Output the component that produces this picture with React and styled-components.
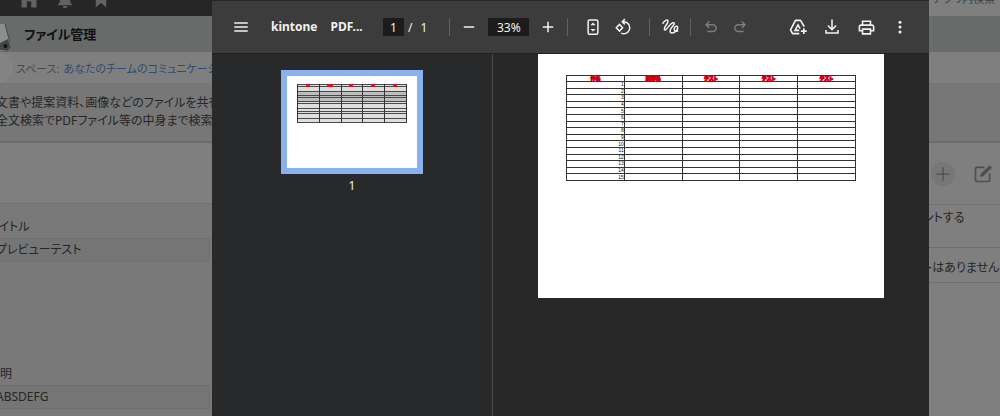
import React from "react";
import styled, { createGlobalStyle } from "styled-components";

const GlobalStyle = createGlobalStyle`
  * { box-sizing: border-box; }
  html, body, #root { height: 100%; }
  body {
    margin: 0;
    background: #fff;
    font-family: "Noto Sans", "Noto Sans CJK JP", sans-serif;
    font-feature-settings: "palt";
    overflow: hidden;
  }
  button, input { font: inherit; color: inherit; border: 0; padding: 0; margin: 0; }
`;

/* ---------- kintone page behind the viewer ---------- */

const Screen = styled.div`
  position: relative;
  height: 100%;
  padding-bottom: 2px;
  overflow: hidden;
`;

const Backdrop = styled.div`
  height: 100%;
  display: flex;
  flex-direction: column;
  background: #7f7f7f;
  color: #262626;
  white-space: nowrap;
  overflow: hidden;
`;

const GlobalHeader = styled.header`
  display: flex;
  flex: 0 0 16px;
  overflow: hidden;
  background: #262626;
`;

const HeaderIcons = styled.nav`
  display: flex;
  flex: 1;
  gap: 18px;
  padding-left: 20px;
  color: #626262;
  svg { flex: none; margin-top: -9px; }
`;

const SearchBox = styled.div`
  width: 71px;
  padding-left: 4px;
  overflow: hidden;
  background: #7f7f7f;
  font-size: 11px;
  line-height: 16px;
  color: #3d3d3d;
  span { display: block; margin-top: -9px; }
`;

const AppTitleBar = styled.div`
  display: flex;
  align-items: center;
  flex: 0 0 36px;
  background: #686b6a;
`;

const AppIcon = styled.svg`
  width: 12px;
  height: 36px;
`;

const AppTitle = styled.h1`
  margin: 0 0 0 12px;
  font-size: 13px;
  line-height: 20px;
  font-weight: 600;
  color: #111;
`;

const SpaceBar = styled.div`
  display: flex;
  align-items: center;
  gap: 4px;
  flex: 0 0 31px;
  font-size: 11px;
  color: #4a4a4a;
  a { color: #2f4a6c; text-decoration: none; }
`;

const SpaceIcon = styled.span`
  width: 12px;
  height: 28px;
  border-radius: 0 14px 14px 0;
  border: 1px solid #888;
  border-left: 0;
  background: #838383;
`;

const Description = styled.div`
  flex: 0 0 60px;
  padding-top: 11px;
  border-bottom: 2px solid #6c6c6c;
  background: #777;
  font-size: 12px;
  line-height: 18px;
  p { margin: 0 0 0 -4px; }
`;

const Columns = styled.div`
  flex: 1;
  display: flex;
`;

const Record = styled.main`
  flex: 1;
  padding-top: 60px;
`;

const Fields = styled.div`
  height: 100%;
  padding-top: 12px;
  border-top: 1px solid #707070;
  background: #797979;
  font-size: 12px;
`;

const Field = styled.div`
  height: 147px;
  h2 {
    margin: 0;
    font-size: 12px;
    line-height: 22px;
    font-weight: 400;
    text-indent: -12px;
  }
  p {
    width: 210px;
    margin: 0;
    border: 1px solid #6f6f6f;
    border-left: 0;
    background: #757575;
    line-height: 22px;
    text-indent: -4px;
  }
`;

const Comments = styled.aside`
  width: 77px;
  font-size: 12px;
`;

const CommentActions = styled.div`
  display: flex;
  align-items: center;
  gap: 16px;
  height: 62px;
  padding-left: 8px;
  border-bottom: 1px solid #747474;
  color: #4f4f4f;
`;

const RoundButton = styled.button`
  display: grid;
  place-items: center;
  width: 24px;
  height: 24px;
  border-radius: 50%;
  background: #777;
`;

const PlainButton = styled(RoundButton)`
  background: none;
`;

const CommentLine = styled.p`
  margin: 0;
  height: ${(p) => p.$height}px;
  padding: ${(p) => p.$top}px 0 0;
  border-bottom: 1px solid #6f6f6f;
  line-height: 16px;
`;

/* ---------- PDF viewer ---------- */

const Viewer = styled.section`
  position: absolute;
  inset: 1px 71px 2px 212px;
  display: flex;
  flex-direction: column;
  background: #282828;
  color: #f1f1f1;
`;

const Toolbar = styled.div`
  display: flex;
  align-items: center;
  flex: 0 0 53px;
  padding: 0 15px 0 15px;
  border-bottom: 1px solid #222;
  background: #3c3c3c;
  font-size: 12px;
`;

const FileName = styled.h2`
  width: 96px;
  margin: 0 16px;
  font-size: 12px;
  line-height: 18px;
  font-weight: 700;
  white-space: nowrap;
  span { margin-left: 13px; }
`;

const Group = styled.div`
  display: flex;
  align-items: center;
  gap: ${(p) => p.$gap || 0}px;
  margin-left: ${(p) => (p.$end ? "auto" : `${p.$before || 0}px`)};
`;

const ToolButton = styled.button`
  display: grid;
  place-items: center;
  width: 28px;
  height: 28px;
  background: none;
  color: ${(p) => (p.disabled ? "#7c7c7c" : "#f1f1f1")};
`;

const ValueBox = styled.input`
  width: ${(p) => p.$width}px;
  height: 18px;
  background: #1c1c1c;
  text-align: center;
`;

const PageCount = styled.span`
  display: flex;
  gap: 8px;
`;

const Separator = styled.span`
  width: 1px;
  height: 18px;
  background: #606060;
`;

const Panes = styled.div`
  flex: 1;
  display: flex;
`;

const Thumbnails = styled.aside`
  display: flex;
  flex-direction: column;
  align-items: center;
  flex: 0 0 281px;
  padding-top: 16px;
  border-right: 1px solid #4a4a4a;
  background: #28292b;
  font-size: 12px;
  line-height: 24px;
`;

const Thumbnail = styled.button`
  width: 142px;
  height: 104px;
  padding: 6px;
  background: #8ab0ef;
  svg { display: block; background: #fff; }
`;

const Canvas = styled.div`
  flex: 1;
  display: flex;
  justify-content: center;
  align-items: flex-start;
`;

const Sheet = styled.article`
  width: 346px;
  height: 244px;
  padding: 21px 28px;
  background: #fff;
`;

const SheetTable = styled.table`
  width: 100%;
  height: 106px;
  table-layout: fixed;
  border-collapse: collapse;
  font-family: "Liberation Sans", "Noto Sans CJK JP", sans-serif;
  font-size: 5px;
  line-height: 5px;
  color: #111;
  th, td { padding: 0; border: 1px solid #333; }
  th { font-weight: 900; color: #d00010; -webkit-text-stroke: 1px #d00010; }
  td { text-align: right; }
`;

const Icon = ({ size = 18, children, ...rest }) => (
  <svg
    width={size}
    height={size}
    viewBox="0 0 24 24"
    fill="none"
    stroke="currentColor"
    strokeWidth="2"
    aria-hidden="true"
    {...rest}
  >
    {children}
  </svg>
);

const Solid = ({ d, ...rest }) => (
  <Icon {...rest}>
    <path d={d} fill="currentColor" stroke="none" />
  </Icon>
);

const UNDO =
  "M7 19v-2h7.1q1.575 0 2.738-1T18 13.5T16.838 11T14.1 10H7.8l2.6 2.6L9 14L4 9l5-5l1.4 1.4L7.8 8h6.3q2.425 0 4.163 1.575T20 13.5t-1.737 3.925T14.1 19z";

const headings = ["件名", "顧客名", "テスト", "テスト", "テスト"];
const rows = Array.from({ length: 15 }, (_, i) => i + 1);

const PageThumbnail = () => (
  <svg width="130" height="92" viewBox="0 0 130 92" aria-hidden="true">
    <rect x="10" y="8" width="110" height="39" fill="#dedede" />
    <rect x="10" y="16" width="110" height="9" fill="#bdbdbd" />
    {[8.5, 10.5, 15.5, 19.5, 21.5, 25.5, 27.5, 32.5, 35.5, 37.5, 42.5, 46.5].map((y) => (
      <path key={y} d={`M10 ${y}h110`} stroke="#4a4a4a" />
    ))}
    {[10.5, 32.5, 54.5, 75.5, 97.5, 119.5].map((x) => (
      <path key={x} d={`M${x} 8v39`} stroke="#333" />
    ))}
    {[19, 40, 62, 84, 106].map((x, i) => (
      <rect key={x} x={x} y="8" width={i === 1 ? 6 : 4} height="3" fill="#d41424" />
    ))}
  </svg>
);

const KintonePage = () => (
  <Backdrop>
    <GlobalHeader>
      <HeaderIcons aria-label="メニュー">
        <Solid d="M2 10 12 2l10 8v12h-7v-8H9v8H2z" />
        <Solid d="M12 2a7 7 0 0 0-7 7v6l-3 4h20l-3-4V9a7 7 0 0 0-7-7zM9 20h6a3 3 0 0 1-6 0z" />
        <Solid d="M5 2h14v20l-7-6-7 6z" />
      </HeaderIcons>
      <SearchBox><span>アプリ内検索</span></SearchBox>
    </GlobalHeader>
    <AppTitleBar>
      <AppIcon viewBox="0 0 12 36" aria-hidden="true">
        <path d="M0 8h5l5 22-4 5H0z" fill="#8d8f8e" />
        <path d="M0 27l8-4 2.5 8-3 4-7.5-1z" fill="#444746" />
        <circle cx="5.5" cy="30" r="2" fill="#151515" />
        <path d="M5 8l5 18" stroke="#4c4e4d" fill="none" />
      </AppIcon>
      <AppTitle>ファイル管理</AppTitle>
    </AppTitleBar>
    <SpaceBar>
      <SpaceIcon />
      <span>スペース:</span>
      <a href="#space">あなたのチームのコミュニケーション</a>
    </SpaceBar>
    <Description>
      <p>文書や提案資料、画像などのファイルを共有</p>
      <p>全文検索でPDFファイル等の中身まで検索</p>
    </Description>
    <Columns>
      <Record>
        <Fields>
          <Field>
            <h2>タイトル</h2>
            <p>プレビューテスト</p>
          </Field>
          <Field>
            <h2>説明</h2>
            <p>ABSDEFG</p>
          </Field>
        </Fields>
      </Record>
      <Comments>
        <CommentActions>
          <RoundButton aria-label="追加">
            <Icon size={20} strokeWidth="1.5"><path d="M12 4v16M4 12h16" /></Icon>
          </RoundButton>
          <PlainButton aria-label="編集">
            <Icon size={20}>
              <path d="M14 4H5a2 2 0 0 0-2 2v13a2 2 0 0 0 2 2h13a2 2 0 0 0 2-2v-8" />
              <path d="M9 15l1-3.5L20 2l2.5 2.5L12.5 14z" fill="currentColor" strokeWidth="1" />
            </Icon>
          </PlainButton>
        </CommentActions>
        <CommentLine $height={43} $top={5}>ントする</CommentLine>
        <CommentLine $height={35} $top={12}>トはありません</CommentLine>
      </Comments>
    </Columns>
  </Backdrop>
);

const ViewerToolbar = () => (
  <Toolbar role="toolbar">
    <ToolButton aria-label="メニュー">
      <Icon><path d="M3 6.7h18M3 12h18M3 17.3h18" /></Icon>
    </ToolButton>
    <FileName>kintone<span>PDF...</span></FileName>
    <Group $gap={4}>
      <ValueBox $width={21} defaultValue="1" aria-label="ページ番号" />
      <PageCount><span>/</span><span>1</span></PageCount>
    </Group>
    <Group $gap={5} $before={22}>
      <Separator />
      <ToolButton aria-label="縮小"><Icon><path d="M5 12h14" /></Icon></ToolButton>
      <ValueBox $width={41} defaultValue="33%" aria-label="ズーム" />
      <ToolButton aria-label="拡大"><Icon><path d="M12 5v14M5 12h14" /></Icon></ToolButton>
      <Separator />
    </Group>
    <Group $gap={2} $before={11}>
      <ToolButton aria-label="ページに合わせる">
        <Icon>
          <rect x="5.5" y="2.5" width="13" height="19" rx="2" />
          <path d="M12 6l3.5 3.5h-7zM8.500 14.5h7L12 18z" fill="currentColor" stroke="none" />
        </Icon>
      </ToolButton>
      <ToolButton aria-label="回転">
        <Icon>
          <path d="M7.3 8.5l4.2 4.5-4.2 4.5L3 13z" />
          <path d="M12 5h1a8 8 0 0 1 0 16c-1.300 0-2.400-.3-3.400-.8" />
          <path d="M14.5 1.5L11 5l3.500 3.500" />
        </Icon>
      </ToolButton>
    </Group>
    <Group $gap={6} $before={12}>
      <Separator />
      <ToolButton aria-label="手書き">
        <Icon size={20} strokeLinecap="round" strokeWidth="1.800">
          <path d="M3.500 7.500C5.500 4.500 8.500 2.500 9.500 4.500c1.200 3-5 7-4.300 10.300C6.200 18.500 11.500 8.500 15 7c4.500-.8 1 3.500-1 5.500-2.500 2.700-2.500 6.700.2 6.800 4 0 7.500-4 7-7-.7-2.600-4-.8-4.200 2-.1 2.200 2 3.200 4.200 2.500" />
        </Icon>
      </ToolButton>
      <Separator />
    </Group>
    <Group $gap={1} $before={6}>
      <ToolButton disabled aria-label="元に戻す"><Solid d={UNDO} /></ToolButton>
      <ToolButton disabled aria-label="やり直す"><Solid d={UNDO} transform="scale(-1 1)" /></ToolButton>
    </Group>
    <Group $gap={6} $end>
      <ToolButton aria-label="ドライブに保存">
        <Icon size={20}>
          <path d="M13.500 20H5.500L3 15.500 9 4h6l4.500 7.500" strokeLinejoin="round" />
          <path d="M13.500 16H8.500L12 9.500l2.500 4.500" />
          <path d="M19 13.500v7M15.500 17h7" />
        </Icon>
      </ToolButton>
      <ToolButton aria-label="ダウンロード">
        <Icon><path d="M12 2v13M6.5 10l5.5 5.5 5.5-5.5M4 16v4h16v-4" /></Icon>
      </ToolButton>
      <ToolButton aria-label="印刷">
        <Solid d="M19 8h-1V3H6v5H5c-1.660 0-3 1.340-3 3v6h4v4h12v-4h4v-6c0-1.660-1.340-3-3-3zM8 5h8v3H8V5zm8 12v2H8v-4h8v2zm2-2v-2H6v2H4v-4c0-.55.45-1 1-1h14c.55 0 1 .45 1 1v4h-2z" size={19} />
      </ToolButton>
      <ToolButton aria-label="その他">
        <Icon>
          <g fill="currentColor" stroke="none">
            <circle cx="12" cy="5.5" r="2" />
            <circle cx="12" cy="12" r="2" />
            <circle cx="12" cy="18.5" r="2" />
          </g>
        </Icon>
      </ToolButton>
    </Group>
  </Toolbar>
);

export default function App() {
  return (
    <Screen>
      <GlobalStyle />
      <KintonePage />
      <Viewer role="dialog" aria-label="kintone PDF">
        <ViewerToolbar />
        <Panes>
          <Thumbnails>
            <Thumbnail aria-label="ページ 1"><PageThumbnail /></Thumbnail>
            <span>1</span>
          </Thumbnails>
          <Canvas>
            <Sheet>
              <SheetTable>
                <thead>
                  <tr>{headings.map((h, i) => <th key={i} scope="col">{h}</th>)}</tr>
                </thead>
                <tbody>
                  {rows.map((n) => (
                    <tr key={n}><td>{n}</td><td /><td /><td /><td /></tr>
                  ))}
                </tbody>
              </SheetTable>
            </Sheet>
          </Canvas>
        </Panes>
      </Viewer>
    </Screen>
  );
}
